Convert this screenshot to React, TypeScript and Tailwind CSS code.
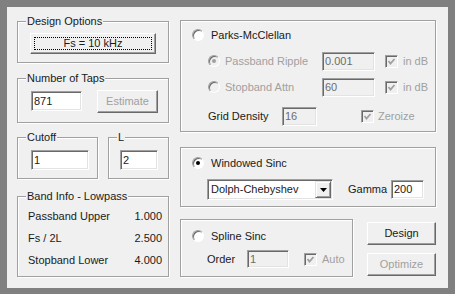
import type { ReactNode } from "react";

function Group({ label, className, children }: { label?: string; className: string; children?: ReactNode }) {
  return (
    <div className={`relative border border-[#a0a0a0] shadow-[1px_1px_0_#fff,inset_1px_1px_0_#fff] ${className}`}>
      {label && (
        <span className="absolute -top-[7px] left-[8px] bg-[#f0f0f0] px-[1px] leading-[13px]">{label}</span>
      )}
      {children}
    </div>
  );
}

function Button({ children, disabled, focused, className }: { children: ReactNode; disabled?: boolean; focused?: boolean; className: string }) {
  return (
    <div
      className={`relative flex items-center justify-center border border-t-white border-l-white border-r-[#696969] border-b-[#696969] bg-[#f0f0f0] shadow-[inset_-1px_-1px_0_#a0a0a0] ${
        disabled ? "text-[#a0a0a0]" : "text-[#1a1a1a]"
      } ${className}`}
    >
      {focused && <span className="absolute inset-[3px] border border-dotted border-black" />}
      <span className="relative">{children}</span>
    </div>
  );
}

function Edit({ value, disabled, className }: { value: string; disabled?: boolean; className: string }) {
  return (
    <div
      className={`flex shrink-0 items-center border border-t-[#a0a0a0] border-l-[#a0a0a0] border-b-white border-r-white pl-[2px] shadow-[inset_1px_1px_0_#696969,inset_-1px_-1px_0_#e3e3e3] ${
        disabled ? "bg-[#f0f0f0] text-[#6d6d6d]" : "bg-white text-[#1a1a1a]"
      } ${className}`}
    >
      {value}
    </div>
  );
}

function Radio({ checked, disabled }: { checked?: boolean; disabled?: boolean }) {
  return (
    <span
      className={`flex h-[12px] w-[12px] shrink-0 items-center justify-center rounded-full border border-t-[#a0a0a0] border-l-[#a0a0a0] border-b-white border-r-white shadow-[inset_1px_1px_0_#696969] ${
        disabled ? "bg-[#f0f0f0]" : "bg-white"
      }`}
    >
      {checked && <span className={`h-[4px] w-[4px] rounded-full ${disabled ? "bg-[#a0a0a0]" : "bg-black"}`} />}
    </span>
  );
}

function Check({ className }: { className: string }) {
  return (
    <span
      className={`flex h-[13px] w-[13px] shrink-0 items-center justify-center border border-t-[#a0a0a0] border-l-[#a0a0a0] border-b-white border-r-white bg-[#f0f0f0] shadow-[inset_1px_1px_0_#696969] ${className}`}
    >
      <svg width="9" height="9" viewBox="0 0 9 9">
        <polyline points="1.5,4 3.5,6.5 7.5,2" fill="none" stroke="#a0a0a0" strokeWidth="1.8" />
      </svg>
    </span>
  );
}

export default function App() {
  return (
    <div className="h-[294px] w-[455px] bg-[#808080] pt-[7px] pr-[7px] pb-[6px] pl-[7px] font-['Liberation_Sans',Arial,sans-serif] text-[11px] leading-[13px] text-[#1a1a1a]">
      <div className="flex h-full bg-[#f0f0f0] pt-[13px] pl-[10px]">
        {/* left column */}
        <div className="mt-[1px] flex w-[152px] flex-col">
          <Group label="Design Options" className="h-[42px] pt-[11px] pl-[12px]">
            <Button focused className="h-[21px] w-[126px]">Fs = 10 kHz</Button>
          </Group>

          <Group label="Number of Taps" className="mt-[15px] flex h-[45px] items-start pt-[11px] pl-[13px]">
            <Edit value="871" className="mt-[1px] h-[20px] w-[51px]" />
            <Button disabled className="ml-[15px] h-[23px] w-[61px]">Estimate</Button>
          </Group>

          <div className="mt-[14px] flex">
            <Group label="Cutoff" className="h-[42px] w-[81px] pt-[12px] pl-[13px]">
              <Edit value="1" className="h-[20px] w-[58px]" />
            </Group>
            <Group label="L" className="ml-[10px] h-[42px] w-[61px] pt-[12px] pl-[11px]">
              <Edit value="2" className="h-[20px] w-[38px]" />
            </Group>
          </div>

          <Group label="Band Info - Lowpass" className="mt-[17px] h-[81px] pt-[8px] pr-[6px] pl-[10px]">
            {[
              ["Passband Upper", "1.000"],
              ["Fs / 2L", "2.500"],
              ["Stopband Lower", "4.000"],
            ].map(([k, v]) => (
              <div key={k} className="flex h-[22px] items-center justify-between">
                <span>{k}</span>
                <span>{v}</span>
              </div>
            ))}
          </Group>
        </div>

        {/* right column */}
        <div className="ml-[11px] flex w-[256px] flex-col">
          <Group className="h-[112px] pt-[6px] pl-[11px]">
            <div className="flex h-[16px] items-center">
              <Radio />
              <span className="ml-[7px]">Parks-McClellan</span>
            </div>
            <div className="mt-[8px] ml-[16px] flex h-[20px] items-center text-[#a0a0a0]">
              <div className="flex w-[114px] items-center">
                <Radio checked disabled />
                <span className="ml-[5px]">Passband Ripple</span>
              </div>
              <Edit disabled value="0.001" className="h-[19px] w-[53px]" />
              <Check className="ml-[10px]" />
              <span className="ml-[5px]">in dB</span>
            </div>
            <div className="mt-[6px] ml-[16px] flex h-[20px] items-center text-[#a0a0a0]">
              <div className="flex w-[114px] items-center">
                <Radio disabled />
                <span className="ml-[5px]">Stopband Attn</span>
              </div>
              <Edit disabled value="60" className="h-[19px] w-[53px]" />
              <Check className="ml-[10px]" />
              <span className="ml-[5px]">in dB</span>
            </div>
            <div className="mt-[9px] ml-[16px] flex h-[20px] items-center">
              <span className="w-[74px]">Grid Density</span>
              <Edit disabled value="16" className="h-[19px] w-[35px]" />
              <Check className="ml-[44px]" />
              <span className="ml-[4px] text-[#a0a0a0]">Zeroize</span>
            </div>
          </Group>

          <Group className="mt-[15px] h-[60px] pt-[7px] pl-[11px]">
            <div className="flex h-[16px] items-center">
              <Radio checked />
              <span className="ml-[7px]">Windowed Sinc</span>
            </div>
            <div className="mt-[8px] ml-[15px] flex items-center">
              <div className="flex h-[21px] w-[126px] items-center border border-t-[#a0a0a0] border-l-[#a0a0a0] border-b-white border-r-white bg-white shadow-[inset_1px_1px_0_#696969,inset_-1px_-1px_0_#e3e3e3]">
                <span className="flex-1 pl-[3px]">Dolph-Chebyshev</span>
                <span className="mr-[1px] flex h-[17px] w-[16px] items-center justify-center border border-t-[#e3e3e3] border-l-[#e3e3e3] border-r-[#696969] border-b-[#696969] bg-[#f0f0f0] shadow-[inset_1px_1px_0_#fff,inset_-1px_-1px_0_#a0a0a0]">
                  <svg width="7" height="4" viewBox="0 0 7 4">
                    <polygon points="0,0 7,0 3.5,4" fill="#000" />
                  </svg>
                </span>
              </div>
              <span className="ml-[15px] w-[43px]">Gamma</span>
              <Edit value="200" className="h-[19px] w-[33px]" />
            </div>
          </Group>

          <div className="mt-[12px] flex">
            <Group className="h-[58px] w-[173px] pt-[8px] pl-[11px]">
              <div className="flex h-[16px] items-center">
                <Radio />
                <span className="ml-[7px]">Spline Sinc</span>
              </div>
              <div className="mt-[6px] ml-[15px] flex h-[18px] items-center">
                <span className="w-[40px]">Order</span>
                <Edit disabled value="1" className="h-[18px] w-[42px]" />
                <Check className="ml-[15px]" />
                <span className="ml-[5px] text-[#a0a0a0]">Auto</span>
              </div>
            </Group>
            <div className="ml-[14px] flex flex-col pt-[3px]">
              <Button className="h-[23px] w-[69px]">Design</Button>
              <Button disabled className="mt-[8px] h-[23px] w-[69px]">Optimize</Button>
            </div>
          </div>
        </div>
      </div>
    </div>
  );
}
